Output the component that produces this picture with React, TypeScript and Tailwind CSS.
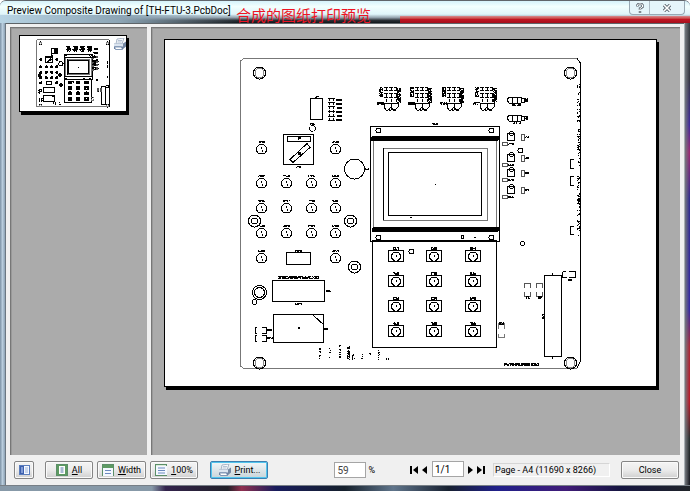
import React from 'react';

/* ---------- board artwork helpers ---------- */

type Pt = [number, number];

// A strip of tiny silkscreen marks, too small to be read.
function Marks({ x, y, w, h = 3, seed = 1 }: { x: number; y: number; w: number; h?: number; seed?: number }) {
  let d = '';
  let s = seed * 7919 + x * 31 + y * 17;
  for (let i = 0; i < w; i++) {
    for (let j = 0; j < h; j++) {
      s = (s * 1103515245 + 12345) % 2147483648;
      if ((s >> 8) % 10 < 8) d += `M${x + i} ${y + j}h1v1h-1z`;
    }
  }
  return <path d={d} fill="#000" stroke="none" />;
}

function Sparse({ x, y, w, h, seed = 1, density = 3 }: { x: number; y: number; w: number; h: number; seed?: number; density?: number }) {
  let d = '';
  let s = seed * 104729;
  for (let j = 0; j < h; j++) {
    for (let i = 0; i < w; i++) {
      s = (s * 1103515245 + 12345) % 2147483648;
      if ((s >> 8) % 10 < density) d += `M${x + i} ${y + j}h1v1h-1z`;
    }
  }
  return <path d={d} fill="#000" stroke="none" />;
}

const leds: Pt[] = [
  [261, 149], [335, 149],
  [261, 183], [286, 183], [311, 183], [335, 183],
  [261, 208], [286, 208], [311, 208], [335, 208],
  [261, 233], [286, 233], [311, 233], [335, 233],
  [261, 258], [335, 258],
];

const keyX = [396, 434, 473];
const keyY = [256, 281, 306, 331];
const connectors = [391, 422, 454, 487];

function Led({ x, y }: { x: number; y: number }) {
  return (
    <g>
      <path d={`M${x - 3} ${y + 4}a5 5 0 1 1 7 0z`} />
      <path d={`M${x} ${y - 2}v2M${x + 1} ${y + 1}v2`} />
      <Marks x={x - 3} y={y - 8} w={7} h={2} />
    </g>
  );
}

function Key({ x, y }: { x: number; y: number }) {
  return (
    <g>
      <rect x={x - 7.5} y={y - 5.5} width="15" height="11" />
      <path d={`M${x - 2} ${y - 4}h4l2.500 3v3l-3 3h-3l-3-3v-3z`} />
      <path d={`M${x} ${y - 1}v2`} />
      <Marks x={x - 3} y={y - 9} w={6} h={3} />
    </g>
  );
}

function Connector({ x }: { x: number }) {
  return (
    <g>
      <path d={`M${x - 7} 87.5h13M${x - 7} 90.5h13M${x - 7} 93.5h13M${x - 7} 97.5h13`} strokeDasharray="4 1" />
      <path d={`M${x - 4.5} 87v15M${x + 0.5} 87v15M${x + 5.5} 87v15`} strokeDasharray="4 2" />
      <path d={`M${x - 7} 103v4l2 3h2l3-3v-4zM${x} 103v4l2 3h2l3-3v-4z`} />
      <Marks x={x - 12} y={87} w={4} h={10} seed={2} />
      <Marks x={x - 14} y={102} w={7} h={3} seed={4} />
      <Marks x={x + 6} y={88} w={4} h={15} seed={5} />
      <Sparse x={x - 5} y={109} w={10} h={2} seed={9} density={5} />
    </g>
  );
}

function Hole({ x, y }: { x: number; y: number }) {
  return (
    <g>
      <circle cx={x} cy={y} r="6" />
      <circle cx={x} cy={y} r="4.5" stroke="#888" />
    </g>
  );
}

function Washer({ x, y }: { x: number; y: number }) {
  return (
    <g>
      <circle cx={x} cy={y} r="6" />
      <circle cx={x} cy={y} r="3" />
    </g>
  );
}

function Board() {
  return (
    <g fill="none" stroke="#000" strokeWidth="1" shapeRendering="crispEdges" className="[&_*]:[vector-effect:non-scaling-stroke]">
      {/* outline */}
      <path d="M240.500 365V61l3-2.500H577" stroke="#777" />
      <path d="M240.500 364v2l3 2.500H577" stroke="#777" />
      <path d="M577 58.500l3 4V362l-3 6" />
      <Hole x={259.500} y={73} />
      <Hole x={570.500} y={73} />
      <Hole x={259.500} y={363} />
      <Hole x={570.500} y={363} />

      {/* upper left */}
      <rect x="310.500" y="98.500" width="12" height="21" />
      <Marks x={315} y={96} w={4} h={2} />
      <path d="M329.500 98v23M333.500 98v23" strokeDasharray="3 1" />
      <path d="M328 98.500h7M328 102.500h7M328 106.500h7M328 111.500h7M328 116.500h7M328 120.500h7" />
      <path d="M336 99.500h6M336 103.500h6M337 107.500h5M336 111.500h6M337 115.500h5M336 119.500h6" strokeWidth="2" />
      <circle cx="312.500" cy="128.500" r="3" strokeDasharray="3 1" />
      <Marks x={310} y={123} w={5} h={2} />

      <rect x="283.500" y="134.500" width="30" height="30" />
      <rect x="287.500" y="136.500" width="23" height="5" />
      <path d="M290 159.500l17-16 3 4-17 15z" />
      <Marks x={298} y={137} w={3} h={3} />
      <Marks x={298} y={152} w={3} h={3} />
      <Marks x={296} y={166} w={5} h={2} />
      <circle cx="354.500" cy="169" r="10" />
      <Marks x={365} y={168} w={4} h={2} />

      {leds.map(([x, y]) => <Led key={`${x}-${y}`} x={x} y={y} />)}
      <Washer x={254.500} y={221} />
      <Washer x={350.500} y={221} />
      <Washer x={354.500} y={267} />

      {/* lower left */}
      <rect x="286.500" y="252.500" width="24" height="12" />
      <Marks x={295} y={250} w={7} h={2} />
      <rect x="272.500" y="280.500" width="52" height="21" />
      <Marks x={278} y={276} w={41} h={3} />
      <Marks x={326} y={290} w={5} h={2} />
      <Marks x={295} y={303} w={7} h={2} />
      <circle cx="259.500" cy="292.500" r="7" />
      <circle cx="259.500" cy="292.500" r="5" />
      <circle cx="254.500" cy="302" r="2.500" />
      <rect x="273.500" y="314.500" width="50" height="28" />
      <path d="M313 315l11 10" />
      <Marks x={298} y={327} w={2} h={2} />
      <Marks x={324} y={328} w={4} h={2} />
      <path d="M257 327.500h-2v6h2M262 327.500h4v6h-4M257 335.500h-2v6h2M262 335.500h4v6h-4" />
      <Marks x={267} y={329} w={5} h={2} />
      <Marks x={267} y={337} w={6} h={2} />
      <Sparse x={319} y={348} w={2} h={11} seed={3} density={5} />
      <Sparse x={329} y={348} w={2} h={10} seed={4} density={4} />
      <Sparse x={339} y={345} w={2} h={13} seed={5} density={4} />
      <Sparse x={347} y={346} w={3} h={14} seed={6} density={6} />
      <Sparse x={352} y={354} w={3} h={6} seed={7} density={4} />
      <Sparse x={361} y={353} w={2} h={6} seed={8} density={4} />
      <Sparse x={369} y={352} w={2} h={7} seed={9} density={4} />
      <Sparse x={378} y={350} w={2} h={10} seed={10} density={3} />
      <Marks x={386} y={358} w={3} h={2} />

      {/* connectors along the top */}
      {connectors.map((x) => <Connector key={x} x={x} />)}
      {[100, 118].map((y) => (
        <g key={y}>
          <path d={`M509 ${y - 3}h12l1 3-1 3h-12l-2-3zM512.500 ${y - 3}v6M517.500 ${y - 3}v6`} />
          <path d={`M522 ${y - 2}h2v4h-2`} />
          <Marks x={525} y={y - 2} w={3} h={4} />
          <Sparse x={512} y={y + 4} w={9} h={2} seed={y} density={6} />
        </g>
      ))}

      {/* display */}
      <rect x="370.500" y="126.500" width="129" height="115" />
      <path d="M373.500 138v91M496.500 138v91" stroke="#777" />
      <rect x="371" y="136" width="128" height="5" rx="2" fill="#000" stroke="none" />
      <rect x="372" y="227" width="127" height="5" rx="2" fill="#000" stroke="none" />
      <rect x="383.500" y="148.500" width="104" height="72" stroke="#777" />
      <path d="M383.500 148v72" />
      <rect x="388.500" y="152.500" width="93" height="63" />
      <circle cx="378.500" cy="130.500" r="2.500" />
      <circle cx="491.500" cy="130.500" r="2.500" />
      <circle cx="378.500" cy="237.500" r="2.500" />
      <circle cx="491.500" cy="237.500" r="2.500" />
      <circle cx="462.500" cy="237" r="1.500" />
      <path d="M474 237.500h2M435 184.500h1M410 217.500h2" />
      <Marks x={432} y={123} w={6} h={2} />

      {/* keypad */}
      <rect x="372.500" y="240.500" width="124" height="107" />
      <circle cx="411.500" cy="251.500" r="2.500" />
      {keyY.map((y) => keyX.map((x) => <Key key={`${x}-${y}`} x={x} y={y} />))}

      {/* parts at the right */}
      {[137, 158, 173, 190].map((y) => (
        <g key={y}>
          <path d={`M507.500 ${y + 3.500}v-7h7v7z`} />
          <circle cx="511.500" cy={y - 3.500} r="2" />
          <path d={`M521.500 ${y - 3}h3v6h-3zM502 ${y + 5.500}h5v3h-5z`} stroke="#555" />
          <Marks x={525} y={y - 1} w={4} h={2} />
          <Marks x={508} y={y + 6} w={6} h={2} />
        </g>
      ))}
      <circle cx="520.500" cy="150.500" r="2.500" />
      <circle cx="522.500" cy="243.500" r="2" />
      <path d="M574 159.500h-3.500v9h3.500M574 176.500h-3.500v9h3.500M574 226.500h-3.500v8h3.500" />
      <Sparse x={577} y={84} w={3} h={12} seed={22} density={3} />
      <Sparse x={577} y={98} w={3} h={24} seed={23} density={3} />
      <Sparse x={577} y={128} w={3} h={38} seed={24} density={3} />
      <Sparse x={577} y={176} w={3} h={32} seed={25} density={4} />
      <Sparse x={577} y={210} w={3} h={26} seed={26} density={3} />

      <rect x="544.500" y="275.500" width="17" height="81" />
      <path d="M552.500 273v3M552.500 356v3" />
      <Marks x={542} y={314} w={2} h={5} seed={3} />
      <path d="M562.500 272v5h4M569 277.500h6v-6h-6M566 271.500h-3" />
      <Marks x={568} y={279} w={4} h={2} />
      <path d="M524.500 288v-4.500h6v4.500M524.500 292v4h6v-4M536.500 288v-4.500h6v4.500M536.500 292v4h6v-4" stroke="#555" />
      <Marks x={526} y={296} w={4} h={3} />
      <Marks x={538} y={296} w={4} h={3} />
      <path d="M498.500 329v-6h6v6M498.500 334v3h6v-3" stroke="#777" />
      <Marks x={499} y={322} w={5} h={3} />
      <Marks x={504} y={363} w={35} h={3} seed={8} />
    </g>
  );
}

/* ---------- small icons ---------- */

function PageIcon({ kind }: { kind: 'all' | 'width' | 'full' }) {
  return (
    <svg viewBox="0 0 12 12" className="h-3 w-3 shrink-0" aria-hidden="true">
      <rect x="0.500" y="0.500" width="11" height="11" fill={kind === 'full' ? '#d9ead9' : '#5d9a62'} stroke="#5b8f68" />
      {kind === 'all' && <><rect x="3" y="2" width="6" height="8" fill="#fff" /><path d="M4.500 4h3M4.500 6h3M4.500 8h3" stroke="#5376a8" /></>}
      {kind === 'width' && <><rect x="1" y="4" width="10" height="8" fill="#f4f8ff" /><path d="M3 6.500h6M3 9.500h6" stroke="#6c8ac0" /></>}
      {kind === 'full' && <><rect x="1" y="2" width="11" height="9" fill="#f4f8ff" /><path d="M3 4h7M3 6.500h7M3 9h7" stroke="#6c8ac0" /></>}
    </svg>
  );
}

function PrinterIcon() {
  return (
    <svg viewBox="0 0 13 12" className="h-3 w-[13px] shrink-0" aria-hidden="true">
      <path d="M4 1l7-1-2 6H3z" fill="#f5f8fc" stroke="#8b9cb3" strokeWidth="0.700" />
      <path d="M5 2.500h4M4.500 4h4" stroke="#8c9db5" strokeWidth="0.600" />
      <path d="M1 5.500h9l3-2v5l-3 2.500H1z" fill="#7487a3" />
      <path d="M1 5.500h9v3H1z" fill="#dce5f0" />
      <path d="M1.500 9h7l1 2.500h-7z" fill="#fff" stroke="#52709b" strokeWidth="0.700" />
    </svg>
  );
}

function Arrow({ kind }: { kind: 'first' | 'prev' | 'next' | 'last' }) {
  const d = {
    first: 'M0 0h2v8H0zM8 0v8L3 4z',
    prev: 'M5 0v8L0 4z',
    next: 'M0 0v8l5-4z',
    last: 'M0 0v8l5-4zM6 0h2v8H6z',
  }[kind];
  const wide = kind === 'first' || kind === 'last';
  return (
    <button type="button" aria-label={`${kind} page`} className="shrink-0">
      <svg viewBox={wide ? '0 0 8 8' : '0 0 5 8'} className={wide ? 'h-2 w-2' : 'h-2 w-[5px]'}><path d={d} /></svg>
    </button>
  );
}

const btn =
  'flex h-[18px] shrink-0 items-center justify-center gap-1 rounded-[2px] border border-[#858585] bg-linear-to-b from-[#f4f4f4] via-[#ebebeb] to-[#cfcfcf] shadow-[inset_0_0_0_1px_#fafafa]';

function Sheet({ label }: { label: string }) {
  return (
    <div className="border border-black bg-white shadow-[2px_3px_0_#000]">
      <svg viewBox="165 40 491 346" className="block w-full bg-white" role="img" aria-label={label}>
        <Board />
      </svg>
    </div>
  );
}

export default function App() {
  return (
    <div className="flex min-h-screen w-full flex-col overflow-hidden rounded-t-md border-t border-[#60656a] bg-linear-to-b from-[#8fa5b8] to-[#8294a4] font-[Roboto,'Liberation_Sans',sans-serif] text-[9px] text-black">
      <header className="relative flex h-[22px] shrink-0 items-start bg-[linear-gradient(#d5f2fa,#f2fffe_25%,#dff5fa_60%,#96a5b0_75%,#292f35_88%,#11171b)]">
        <div className="absolute right-0 bottom-0 left-[400px] h-[7px] bg-linear-to-b from-[#d98a90] via-[#c01522] to-[#a5101c]" />
        <div className="absolute bottom-0 left-0 h-[8px] w-[240px] bg-linear-to-r from-[#b8d4e4] via-[#8da5b5] to-transparent" />
        <h1 className="relative ml-[7px] w-[229px] shrink-0 pt-[3px] font-[Roboto,'Noto_Sans',sans-serif] text-[10px] leading-[14px] whitespace-nowrap">
          Preview Composite Drawing of [TH-FTU-3.PcbDoc]
        </h1>
        <span className="relative pt-[6px] font-['Noto_Sans_CJK_SC',sans-serif] text-[15px] leading-[16px] whitespace-nowrap text-[#ee1424]">合成的图纸打印预览</span>
        <div className="relative mr-[5px] ml-auto flex h-[14px] rounded-b-sm border border-t-0 border-[#98a9b4] bg-[#e5f5fa]">
          <button type="button" aria-label="Help" className="flex w-5 items-center justify-center border-r border-[#aebcc5]">
            <svg viewBox="0 0 8 10" className="h-[10px] w-2" fill="none"><path d="M1.500 3.500V2l1-1h3l1 1v2L4 5.500V7M4 8v2" stroke="#566069" strokeWidth="2.400" /><path d="M1.500 3V2l1-1h3l1 1v2L4 5.500V7M4 8.500v1" stroke="#fff" strokeWidth="1" /></svg>
          </button>
          <button type="button" aria-label="Close window" className="flex w-[34px] items-center justify-center">
            <svg viewBox="0 0 10 8" className="h-2 w-[10px]"><path d="M2 1l6 6M8 1L2 7" stroke="#566069" strokeWidth="3.200" /><path d="M2 1l6 6M8 1L2 7" stroke="#fff" strokeWidth="1.600" /></svg>
          </button>
        </div>
      </header>

      <div className="flex grow bg-[linear-gradient(#343a3e,#30303c_12%,#3b22a0_22%,#a02070_28%,#2a2590_38%,#3022a8_62%,#b02030_70%,#c01020_82%,#202828_90%,#15151c)]">
        <div className="w-[6px] shrink-0 border-r border-[#6c7882] bg-linear-to-r from-[#7d92a5] via-[#b9cddd] to-[#8da2b5]" />
        <main className="flex min-w-0 grow flex-col border-t border-[#5e6468] bg-[#f0f0f0] pt-[3px]">
          <div className="flex grow gap-1 px-1">
            <aside className="w-[137px] shrink-0 border-t border-l border-[#777] bg-[#ababab] pt-[7px] pl-2 shadow-[inset_1px_1px_0_#999]">
              <div className="relative w-[108px]">
                <Sheet label="Page thumbnail" />
                <span className="absolute top-[3px] right-px"><PrinterIcon /></span>
              </div>
            </aside>
            <section className="min-w-0 grow border-t border-l border-[#777] bg-[#ababab] pt-[11px] pr-[23px] pb-[68px] pl-3 shadow-[inset_1px_1px_0_#999]">
              <Sheet label="Composite drawing, page 1" />
            </section>
          </div>
          <footer className="flex h-[30px] shrink-0 items-center pr-[5px] pl-2 leading-[12px]">
            <button type="button" aria-label="Toggle thumbnails" className={`${btn} w-5`}>
              <svg viewBox="0 0 11 10" className="h-[10px] w-[11px]"><rect x="0.500" y="0.500" width="10" height="9" fill="#f5f8ff" stroke="#5a7dbd" /><path d="M1 1h4v8H1z" fill="#3c5fae" /><path d="M2 3h2M2 5h2M2 7h2" stroke="#c8dcff" /><path d="M6 3h3M6 5h3M6 7h3" stroke="#9ab3da" /></svg>
            </button>
            <div className="ml-[11px] flex gap-1">
              <button type="button" className={`${btn} w-12`}><PageIcon kind="all" /><span><u>A</u>ll</span></button>
              <button type="button" className={`${btn} w-[49px]`}><PageIcon kind="width" /><span><u>W</u>idth</span></button>
              <button type="button" className={`${btn} w-12`}><PageIcon kind="full" /><span><u>1</u>00%</span></button>
            </div>
            <button type="button" className="ml-3 flex h-[18px] w-[58px] shrink-0 items-center justify-center gap-1 rounded-[2px] border border-[#3c7fb1] bg-linear-to-b from-[#f2f6f8] to-[#c9d5da] shadow-[inset_0_0_0_1px_#53c5ee]"><PrinterIcon /><span><u>P</u>rint...</span></button>
            <label className="ml-auto flex items-center gap-0.5">
              <input aria-label="Zoom percent" defaultValue="59" className="h-4 w-8 border border-[#a5a5a5] bg-white px-0.5 text-[10px] text-[#444]" />
              <span>%</span>
            </label>
            <div className="ml-[35px] flex items-center gap-1">
              <Arrow kind="first" />
              <Arrow kind="prev" />
              <input aria-label="Page number" defaultValue="1/1" className="mb-[2px] ml-px h-4 w-8 border border-[#a5a5a5] bg-white px-0.5 text-[10px]" />
              <Arrow kind="next" />
              <Arrow kind="last" />
            </div>
            <output className="ml-2 w-[117px] shrink-0 border border-[#d5d5d5] border-r-white border-b-white px-px">Page - A4 (11690 x 8266)</output>
            <button type="button" className={`${btn} ml-[11px] w-[58px]`}>Close</button>
          </footer>
        </main>
        <div className="w-[6px] shrink-0 border-l border-[#a9b0b4] bg-linear-to-r from-[#75797e] to-transparent" />
      </div>
      <div className="h-[6px] shrink-0 border-t border-[#777f86] bg-[linear-gradient(90deg,#8799a8_22%,#33234c_24%,#202028_33%,#903050_35%,#181c5c_40%,#15202c_50%,#60758b_57%,#172030_65%,#20208a_72%,#401c78_82%,#151540_90%,#202428)]" />
    </div>
  );
}
